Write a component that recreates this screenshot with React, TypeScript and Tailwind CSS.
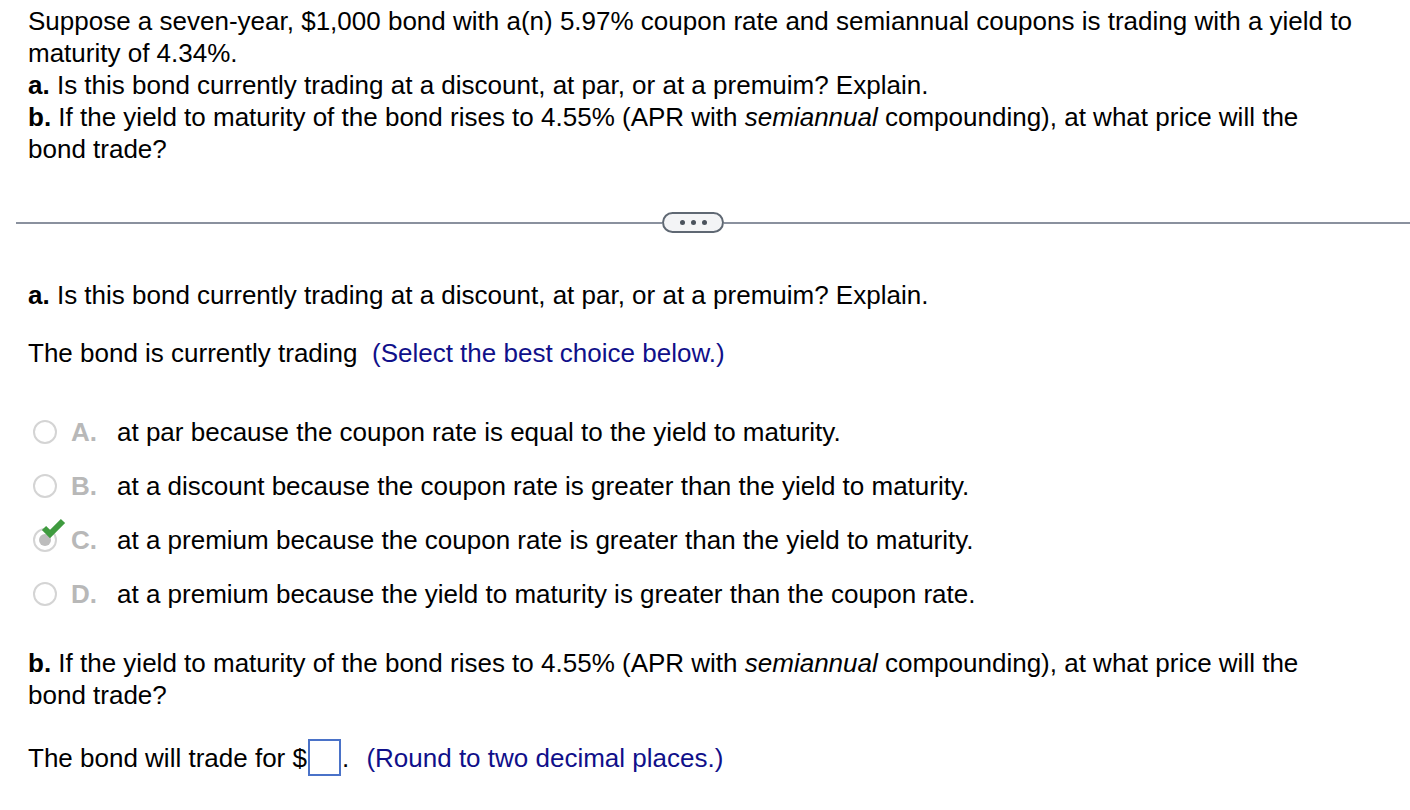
import React from "react";

const navy = "text-[#10108a]";

function Radio({ checked }: { checked?: boolean }) {
  return (
    <span className="relative inline-flex h-[24px] w-[24px] items-center justify-center">
      <span className="absolute inset-0 rounded-full border-2 border-[#d4d4d4] bg-white" />
      {checked && (
        <>
          <span className="absolute h-[12px] w-[12px] rounded-full bg-[#bdbdbd]" />
          <svg
            className="absolute -right-[10px] -top-[10px]"
            width="26"
            height="20"
            viewBox="0 0 26 20"
          >
            <path d="M3 10 L9 16 L22 3" fill="none" stroke="#3f9b3f" strokeWidth="6" strokeLinejoin="miter" />
          </svg>
        </>
      )}
    </span>
  );
}

const options = [
  { k: "A.", t: "at par because the coupon rate is equal to the yield to maturity." },
  { k: "B.", t: "at a discount because the coupon rate is greater than the yield to maturity." },
  { k: "C.", t: "at a premium because the coupon rate is greater than the yield to maturity.", c: true },
  { k: "D.", t: "at a premium because the yield to maturity is greater than the coupon rate." },
];

export default function App() {
  return (
    <div
      className="min-h-[810px] w-[1410px] whitespace-nowrap bg-white text-[26px] leading-[32px] text-black"
      style={{ fontFamily: '"Liberation Sans", Arial, sans-serif' }}
    >
      <div className="pl-[28px] pt-[5px]">
        <p>
          Suppose a seven-year, $1,000 bond with a(n) 5.97% coupon rate and semiannual coupons is trading with a yield to
          <br />
          maturity of 4.34%.
        </p>
        <p>
          <b>a.</b> Is this bond currently trading at a discount, at par, or at a premuim? Explain.
        </p>
        <p>
          <b>b.</b> If the yield to maturity of the bond rises to 4.55% (APR with <i>semiannual</i> compounding), at what
          price will the
          <br />
          bond trade?
        </p>
      </div>

      <div className="mt-[47px] flex items-center pl-[16px]">
        <div className="h-[2px] w-[646px] bg-[#8a919e]" />
        <div className="flex h-[21px] w-[62px] items-center justify-center gap-[6px] rounded-full border-2 border-[#5f6873] bg-[#f3f4f6]">
          <span className="h-[5px] w-[5px] rounded-full bg-[#4a525c]" />
          <span className="h-[5px] w-[5px] rounded-full bg-[#4a525c]" />
          <span className="h-[5px] w-[5px] rounded-full bg-[#4a525c]" />
        </div>
        <div className="h-[2px] flex-1 bg-[#8a919e]" />
      </div>

      <div className="pl-[28px] pt-[46px]">
        <p>
          <b>a.</b> Is this bond currently trading at a discount, at par, or at a premuim? Explain.
        </p>
        <p className="mt-[26px]">
          The bond is currently trading&nbsp; <span className={navy}>(Select the best choice below.)</span>
        </p>

        <div className="mt-[47px] flex flex-col gap-[22px] pl-[5px]">
          {options.map((o) => (
            <div key={o.k} className="flex items-center">
              <Radio checked={o.c} />
              <span className="ml-[14px] w-[46px] font-bold text-[#b8b8b8]">{o.k}</span>
              <span>{o.t}</span>
            </div>
          ))}
        </div>

        <p className="mt-[37px]">
          <b>b.</b> If the yield to maturity of the bond rises to 4.55% (APR with <i>semiannual</i> compounding), at what
          price will the
          <br />
          bond trade?
        </p>

        <p className="mt-[28px] flex items-center">
          The bond will trade for $
          <span className="mx-[1px] inline-block h-[37px] w-[33px] border-2 border-[#4a72c8]" />
          .&nbsp; <span className={`${navy} ml-[10px]`}>(Round to two decimal places.)</span>
        </p>
      </div>
    </div>
  );
}
